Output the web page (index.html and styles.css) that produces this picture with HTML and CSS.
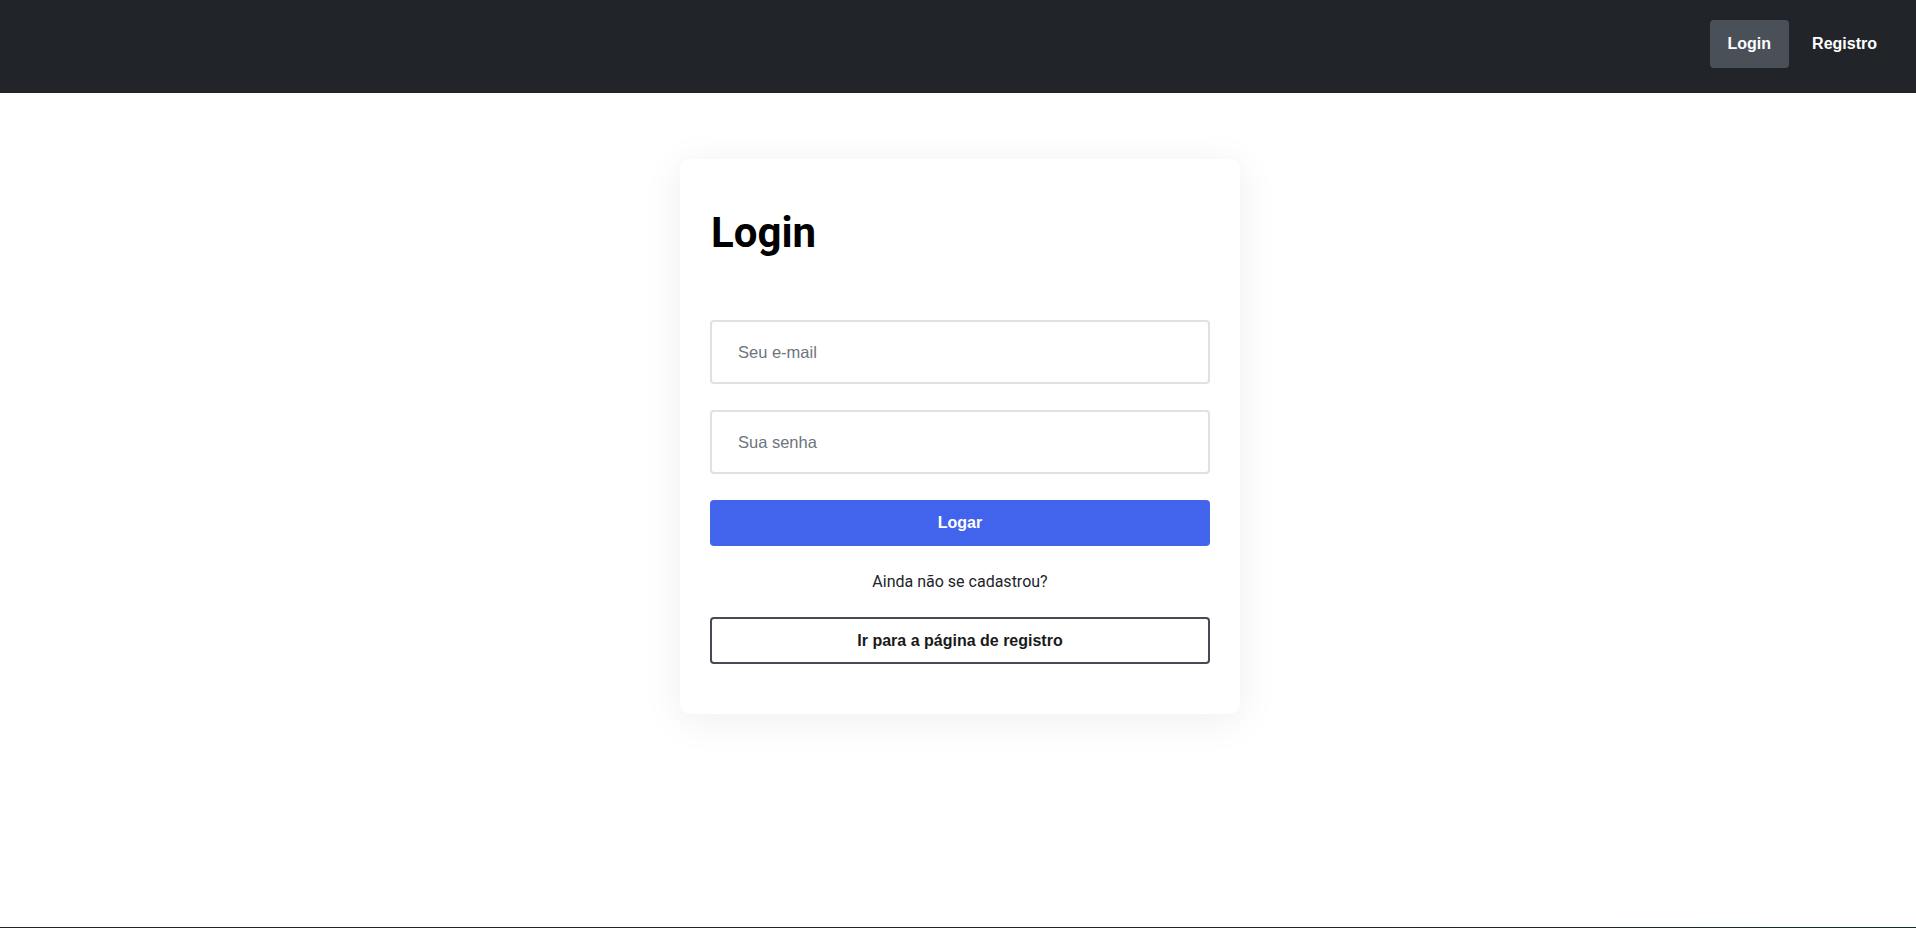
FILE: index.html
```html
<!DOCTYPE html>
<html lang="pt-BR">
<head>
  <meta charset="UTF-8">
  <meta name="viewport" content="width=device-width, initial-scale=1.0">
  <title>Login</title>
  <link rel="stylesheet" href="styles.css">
</head>
<body>
  <header class="topbar">
    <nav class="nav">
      <a href="#" class="nav-link active">Login</a>
      <a href="#" class="nav-link">Registro</a>
    </nav>
  </header>

  <main class="page">
    <div class="card">
      <h1>Login</h1>
      <form class="login-form">
        <input type="email" class="field" placeholder="Seu e-mail">
        <input type="password" class="field" placeholder="Sua senha">
        <button type="submit" class="btn-primary">Logar</button>
        <p class="hint">Ainda não se cadastrou?</p>
        <a href="#" class="btn-outline">Ir para a página de registro</a>
      </form>
    </div>
  </main>

  <footer class="footer"></footer>
</body>
</html>
```

FILE: styles.css
```css
body {
  margin: 0;
  font-family: "Liberation Sans", Arial, sans-serif;
  background-color: #ffffff;
}

.topbar {
  background-color: #212529;
  height: 93px;
  box-sizing: border-box;
  padding: 20px 21px 0 0;
  display: flex;
  justify-content: flex-end;
  align-items: flex-start;
}

.nav {
  display: flex;
  gap: 5px;
}

.nav-link {
  color: #ffffff;
  text-decoration: none;
  font-weight: bold;
  font-size: 16px;
  line-height: 18px;
  padding: 15px 18px;
  border-radius: 4px;
}

.nav-link.active {
  background-color: #495057;
}

.page {
  min-height: calc(100vh - 94px);
  display: flex;
  justify-content: center;
  align-items: flex-start;
  padding-top: 66px;
  box-sizing: border-box;
}

.card {
  background: #ffffff;
  width: 560px;
  box-sizing: border-box;
  padding: 50px 30px;
  margin-left: 4px; /* sits a touch right of centre */
  border-radius: 10px;
  box-shadow: 0 6px 40px rgba(0, 0, 0, 0.07);
}

h1 {
  font-family: Roboto, sans-serif;
  font-weight: 700;
  font-size: 42px;
  margin: -1px 0 63px 1px;
  color: #000000;
}

.login-form {
  display: flex;
  flex-direction: column;
  gap: 26px;
}

.field {
  height: 64px;
  box-sizing: border-box;
  border: 2px solid #dee2e6;
  border-radius: 4px;
  padding: 0 26px;
  font-family: "Liberation Sans", Arial, sans-serif;
  font-size: 16.5px;
  color: #212529;
  outline: none;
}

.field::placeholder {
  color: #6c757d;
}

.btn-primary {
  height: 46px;
  background-color: #4263eb;
  color: #ffffff;
  border: none;
  border-radius: 4px;
  font-family: "Liberation Sans", Arial, sans-serif;
  font-weight: bold;
  font-size: 16px;
  cursor: pointer;
}

.hint {
  margin: 0;
  text-align: center;
  font-family: Roboto, sans-serif;
  font-size: 16px;
  color: #212529;
}

.btn-outline {
  height: 47px;
  box-sizing: border-box;
  border: 2px solid #454b55;
  border-radius: 4px;
  display: flex;
  align-items: center;
  justify-content: center;
  color: #1a1a1a;
  text-decoration: none;
  font-weight: bold;
  font-size: 16px;
}

.footer {
  height: 40px;
  background: linear-gradient(to right, #222222 55%, #15301a);
}
```
